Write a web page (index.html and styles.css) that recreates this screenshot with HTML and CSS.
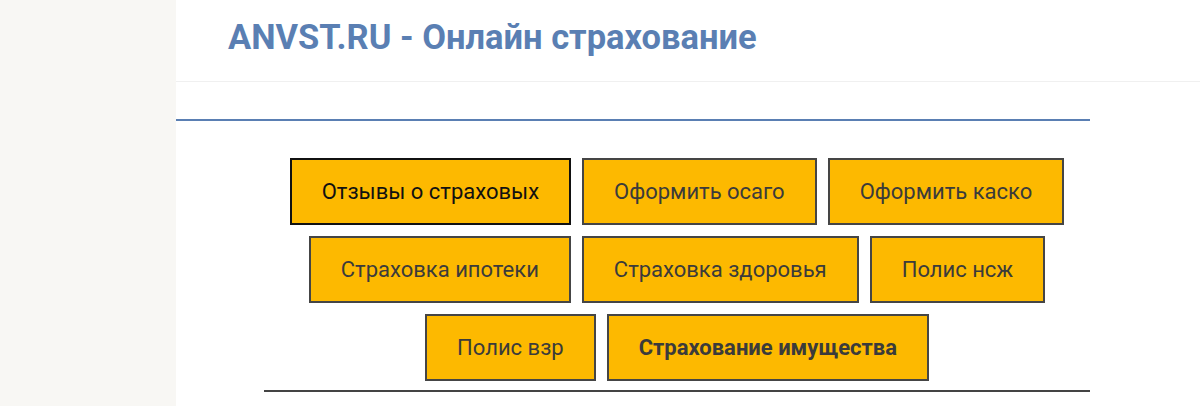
FILE: index.html
```html
<!DOCTYPE html>
<html lang="ru">
<head>
    <meta charset="UTF-8">
    <meta name="viewport" content="width=device-width, initial-scale=1.0">
    <title>ANVST.RU - Онлайн страхование</title>
    <link rel="stylesheet" href="styles.css">
</head>
<body>

<aside class="sidebar"></aside>

<div class="page">
    <header class="site-header">
        <h1>ANVST.RU - Онлайн страхование</h1>
    </header>

    <div class="content">
        <hr class="rule-blue">

        <div class="menu-section">
            <nav class="menu">
                <a href="#" class="active">Отзывы о страховых</a>
                <a href="#">Оформить осаго</a>
                <a href="#">Оформить каско</a>
                <a href="#">Страховка ипотеки</a>
                <a href="#">Страховка здоровья</a>
                <a href="#">Полис нсж</a>
                <a href="#">Полис взр</a>
                <a href="#" class="strong">Страхование имущества</a>
            </nav>
            <hr class="rule-dark">
        </div>
    </div>
</div>

</body>
</html>
```

FILE: styles.css
```css
body {
    font-family: Roboto, "Noto Sans", Arial, sans-serif;
    background-color: #fff;
    margin: 0;
    padding: 0;
    display: flex;
    min-height: 100vh;
}
.sidebar {
    width: 176px;
    flex-shrink: 0;
    background-color: #f8f7f4;
}
.page {
    flex: 1;
}
.site-header {
    height: 81px;
    border-bottom: 1px solid #f0f0f0;
}
.site-header h1 {
    margin: 0;
    padding-left: 52px;
    font-size: 34.5px;
    line-height: 75px;
    font-weight: 700;
    color: #5a7fb3;
}
.content {
    width: 914px;
}
.rule-blue {
    margin: 37px 0 0;
    border: none;
    height: 2px;
    background-color: #5a7fb3;
}
.menu-section {
    margin-left: 88px;
    padding-top: 37px;
}
.menu {
    display: flex;
    flex-wrap: wrap;
    justify-content: center;
    gap: 11px;
}
.menu a {
    display: block;
    height: 63px;
    line-height: 63px;
    padding: 0 30px;
    background-color: #fdb900;
    border: 2px solid #454545;
    color: #3b3b3b;
    font-size: 22px;
    text-decoration: none;
}
.menu a.active {
    border-color: #111;
    color: #111;
}
.menu a.strong {
    font-weight: 700;
}
.rule-dark {
    margin: 9px 0 0;
    border: none;
    height: 2px;
    background-color: #444;
}
```
